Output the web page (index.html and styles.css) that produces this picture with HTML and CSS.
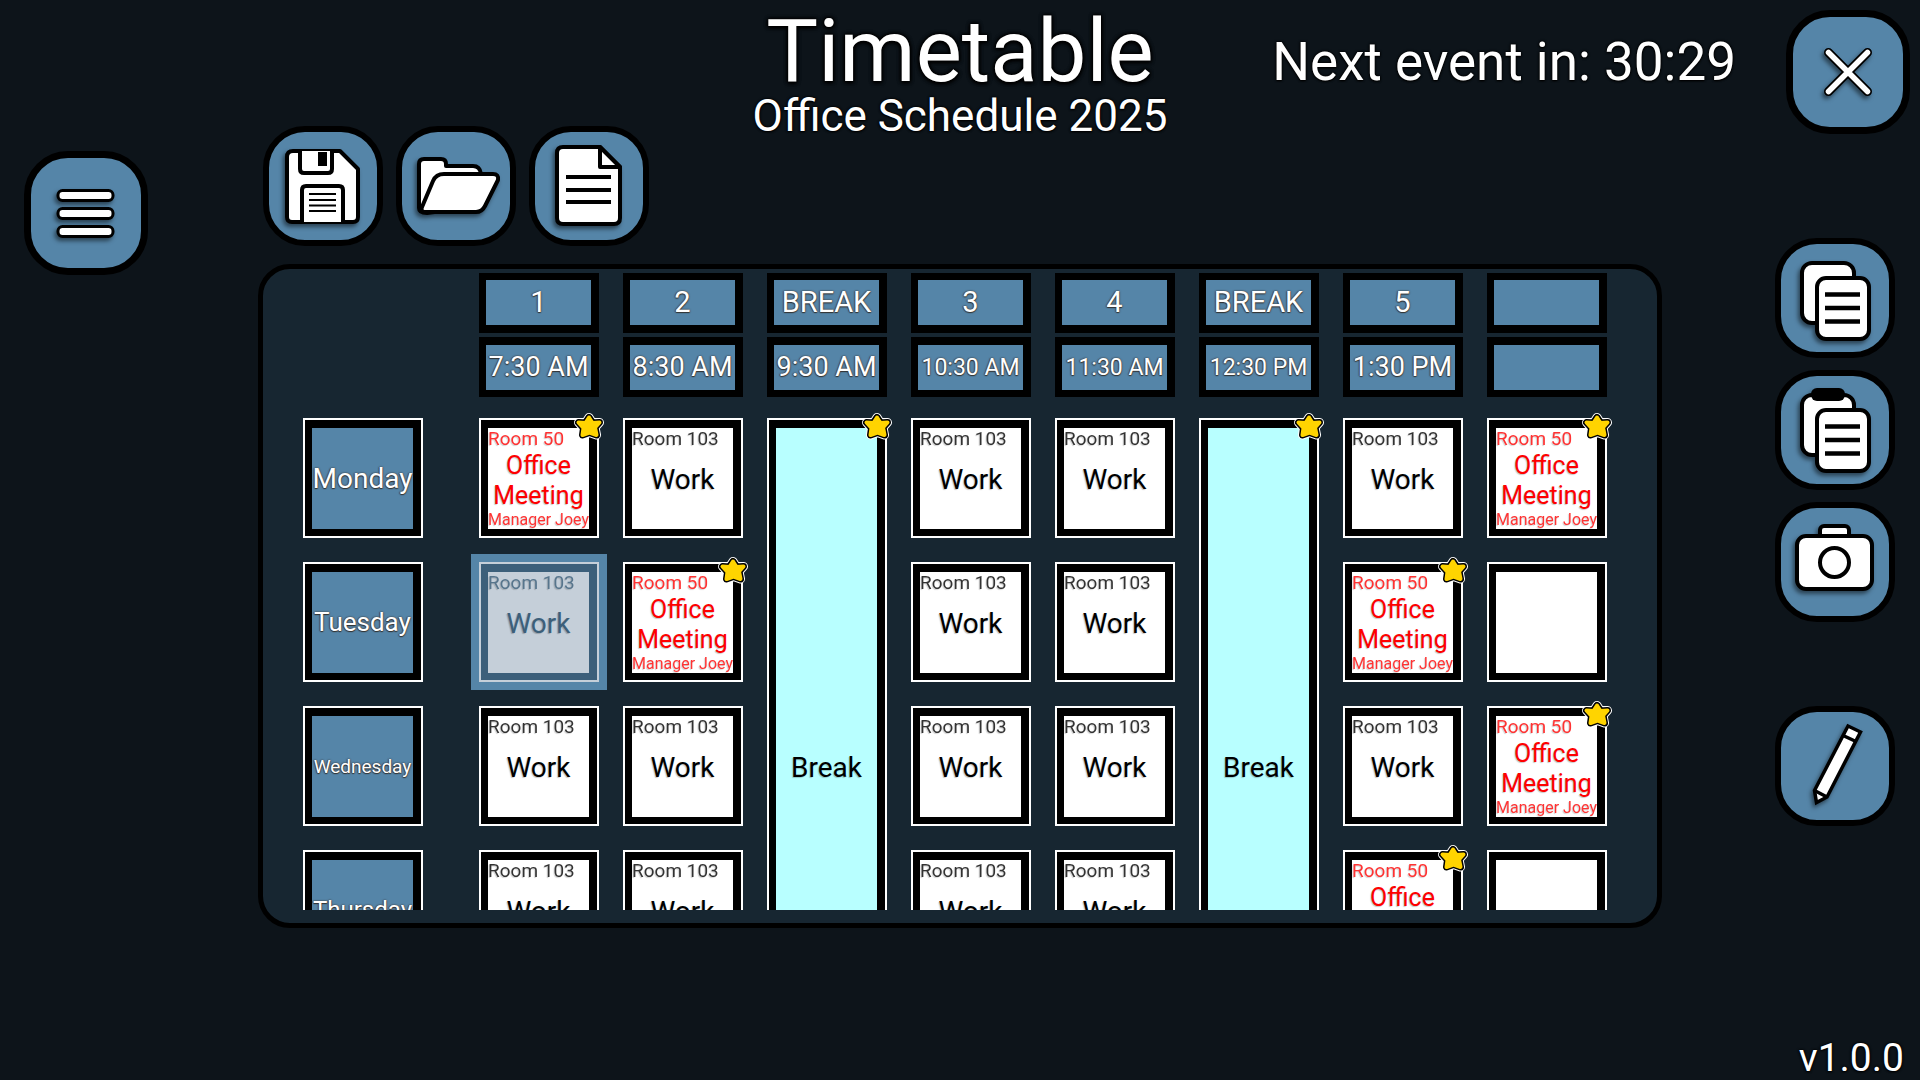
FILE: index.html
```html
<!DOCTYPE html>
<html lang="en">
<head>
<meta charset="utf-8">
<title>Timetable</title>
<link rel="stylesheet" href="styles.css">
</head>
<body>
<svg class="sprite" aria-hidden="true">
  <symbol id="star" viewBox="0 0 30 28">
    <g stroke-linejoin="round">
      <path d="M15 4.500 L18.500 10 L25.500 9.500 L21 14.500 L22.500 22 L15.500 19.500 L8.500 22 L9.500 15 L4.500 9.500 L11.500 10 Z" fill="#fff" stroke="#fff" stroke-width="9"/>
      <path d="M15 4.500 L18.500 10 L25.500 9.500 L21 14.500 L22.500 22 L15.500 19.500 L8.500 22 L9.500 15 L4.500 9.500 L11.500 10 Z" fill="#000" stroke="#000" stroke-width="7"/>
      <path d="M15 4.500 L18.500 10 L25.500 9.500 L21 14.500 L22.500 22 L15.500 19.500 L8.500 22 L9.500 15 L4.500 9.500 L11.500 10 Z" fill="#ffd400" stroke="#ffd400" stroke-width="4"/>
    </g>
  </symbol>
</svg>

<header class="top">
  <div class="heading">
    <h1>Timetable</h1>
    <p class="subtitle">Office Schedule 2025</p>
  </div>
  <div class="top-right">
    <p class="countdown">Next event in: 30:29</p>
    <button class="tile tile-large" type="button" aria-label="Close">
      <svg class="icon" viewBox="0 0 124 124"><g fill="none" stroke-linecap="round"><path d="M42.500 42.500 L81.500 81.500 M81.500 42.500 L42.500 81.500" stroke="#000" stroke-width="9"/><path d="M42.500 42.500 L81.500 81.500 M81.500 42.500 L42.500 81.500" stroke="#fff" stroke-width="5.500"/></g></svg>
    </button>
  </div>
</header>

<nav class="rail-left">
  <button class="tile tile-large" type="button" aria-label="Menu">
    <svg class="icon" viewBox="0 0 124 124"><g fill="#fff" stroke="#000" stroke-width="3"><rect x="34" y="39.500" width="55" height="10" rx="4.500"/><rect x="34" y="57.500" width="55" height="10" rx="4.500"/><rect x="34" y="75.500" width="55" height="10" rx="4.500"/></g></svg>
  </button>
</nav>

<main>
  <div class="toolbar">
    <button class="tile" type="button" aria-label="Save">
      <svg class="icon" viewBox="0 0 120 120"><g fill="#fff" stroke="#000" stroke-width="4" stroke-linejoin="round"><path d="M30 25 H77 L95 43 V91 Q95 96 90 96 H29 Q24 96 24 91 V31 Q24 25 30 25 Z"/><path d="M37 25 V43 Q37 47 41 47 H65 Q69 47 69 43 V25"/><path d="M39 96 V64 Q39 60 43 60 H76 Q80 60 80 64 V96"/></g><path d="M55 26 H64 V40 H55 Z"/><path d="M46 68 H73 M46 74 H73 M46 79.500 H73 M46 85 H73" stroke="#000" stroke-width="2"/></svg>
    </button>
    <button class="tile" type="button" aria-label="Open">
      <svg class="icon" viewBox="0 0 120 120"><g fill="#fff" stroke="#000" stroke-width="4" stroke-linejoin="round"><path d="M23 82 V38 Q23 33 28 33 H45 Q50 33 50 38 V40 H77 Q84 40 85 48 V80 L31 87 Q23 87 23 82 Z"/><path d="M48 48 H97 Q103 48 102 54 L89 80 Q86 86 80 86 H30 Q24 86 26 81 L37 55 Q40 48 48 48 Z"/></g></svg>
    </button>
    <button class="tile" type="button" aria-label="New document">
      <svg class="icon" viewBox="0 0 120 120"><g fill="#fff" stroke="#000" stroke-width="4" stroke-linejoin="round"><path d="M34 21 H71 L91 41 V92 Q91 98 85 98 H34 Q28 98 28 92 V27 Q28 21 34 21 Z"/><path d="M71 21 V41 H91 Z"/></g><path d="M37 51 H82 M37 64 H82 M37 76 H82" stroke="#000" stroke-width="4"/></svg>
    </button>
  </div>

  <section class="panel">
    <div class="scroller">
      <table class="timetable">
        <thead>
          <tr class="periods"><td class="corner"></td><th>1</th><th>2</th><th>BREAK</th><th>3</th><th>4</th><th>BREAK</th><th>5</th><th></th></tr>
          <tr class="times"><td class="corner"></td><th>7:30 AM</th><th>8:30 AM</th><th>9:30 AM</th><th class="long">10:30 AM</th><th class="long">11:30 AM</th><th class="long">12:30 PM</th><th>1:30 PM</th><th></th></tr>
        </thead>
        <tbody>
          <tr>
            <th scope="row" class="box day">Monday</th>
            <td class="box slot meeting"><span class="room">Room 50</span><span class="name">Office Meeting</span><span class="who">Manager Joey</span><svg class="star"><use href="#star"/></svg></td>
            <td class="box slot"><span class="room">Room 103</span><span class="name">Work</span></td>
            <td class="box slot break" rowspan="5"><span class="name">Break</span><svg class="star"><use href="#star"/></svg></td>
            <td class="box slot"><span class="room">Room 103</span><span class="name">Work</span></td>
            <td class="box slot"><span class="room">Room 103</span><span class="name">Work</span></td>
            <td class="box slot break" rowspan="5"><span class="name">Break</span><svg class="star"><use href="#star"/></svg></td>
            <td class="box slot"><span class="room">Room 103</span><span class="name">Work</span></td>
            <td class="box slot meeting"><span class="room">Room 50</span><span class="name">Office Meeting</span><span class="who">Manager Joey</span><svg class="star"><use href="#star"/></svg></td>
          </tr>
          <tr>
            <th scope="row" class="box day medium">Tuesday</th>
            <td class="box slot selected"><span class="room">Room 103</span><span class="name">Work</span></td>
            <td class="box slot meeting"><span class="room">Room 50</span><span class="name">Office Meeting</span><span class="who">Manager Joey</span><svg class="star"><use href="#star"/></svg></td>
            <td class="box slot"><span class="room">Room 103</span><span class="name">Work</span></td>
            <td class="box slot"><span class="room">Room 103</span><span class="name">Work</span></td>
            <td class="box slot meeting"><span class="room">Room 50</span><span class="name">Office Meeting</span><span class="who">Manager Joey</span><svg class="star"><use href="#star"/></svg></td>
            <td class="box slot"></td>
          </tr>
          <tr>
            <th scope="row" class="box day longest">Wednesday</th>
            <td class="box slot"><span class="room">Room 103</span><span class="name">Work</span></td>
            <td class="box slot"><span class="room">Room 103</span><span class="name">Work</span></td>
            <td class="box slot"><span class="room">Room 103</span><span class="name">Work</span></td>
            <td class="box slot"><span class="room">Room 103</span><span class="name">Work</span></td>
            <td class="box slot"><span class="room">Room 103</span><span class="name">Work</span></td>
            <td class="box slot meeting"><span class="room">Room 50</span><span class="name">Office Meeting</span><span class="who">Manager Joey</span><svg class="star"><use href="#star"/></svg></td>
          </tr>
          <tr>
            <th scope="row" class="box day long">Thursday</th>
            <td class="box slot"><span class="room">Room 103</span><span class="name">Work</span></td>
            <td class="box slot"><span class="room">Room 103</span><span class="name">Work</span></td>
            <td class="box slot"><span class="room">Room 103</span><span class="name">Work</span></td>
            <td class="box slot"><span class="room">Room 103</span><span class="name">Work</span></td>
            <td class="box slot meeting"><span class="room">Room 50</span><span class="name">Office Meeting</span><span class="who">Manager Joey</span><svg class="star"><use href="#star"/></svg></td>
            <td class="box slot"></td>
          </tr>
          <tr>
            <th scope="row" class="box day">Friday</th>
            <td class="box slot"></td>
            <td class="box slot"></td>
            <td class="box slot"></td>
            <td class="box slot"></td>
            <td class="box slot"></td>
            <td class="box slot"></td>
          </tr>
        </tbody>
      </table>
    </div>
  </section>
</main>

<aside class="rail-right">
  <button class="tile" type="button" aria-label="Copy">
    <svg class="icon" viewBox="0 0 120 120"><g fill="#fff" stroke="#000" stroke-width="4"><rect x="27" y="25" width="52" height="60" rx="10"/><rect x="42" y="40" width="52" height="61" rx="9"/></g><path d="M50 56.500 H85 M50 70 H85 M50 83.500 H85" stroke="#000" stroke-width="4.500"/></svg>
  </button>
  <button class="tile" type="button" aria-label="Paste">
    <svg class="icon" viewBox="0 0 120 120"><g fill="#fff" stroke="#000" stroke-width="4"><rect x="27" y="25" width="52" height="60" rx="10"/><rect x="42" y="40" width="52" height="61" rx="9"/></g><rect x="36" y="18" width="34" height="13" rx="6"/><path d="M50 56.500 H85 M50 70 H85 M50 83.500 H85" stroke="#000" stroke-width="4.500"/></svg>
  </button>
  <button class="tile" type="button" aria-label="Take picture">
    <svg class="icon" viewBox="0 0 120 120"><g fill="#fff" stroke="#000" stroke-width="4"><rect x="45" y="24" width="29" height="20" rx="4"/><rect x="22" y="34" width="75" height="53" rx="9"/><circle cx="59.500" cy="60.500" r="14.500"/></g></svg>
  </button>
  <button class="tile edit" type="button" aria-label="Edit">
    <svg class="icon" viewBox="0 0 120 120"><g fill="#fff" stroke="#000" stroke-width="3.500"><path d="M73 20 L85.500 26 L52 91 L41.500 96.500 L39.500 84.500 Z"/><path d="M67 29 L81 35.500 M39.500 84.500 L52 91"/></g></svg>
  </button>
</aside>

<footer class="version">v1.0.0</footer>
</body>
</html>
```
FILE: styles.css
```css
:root {
  --blue: #5585a8;
  --night: #0d141a;
  --panel: #172631;
}

* { box-sizing: border-box; }

body {
  margin: 0;
  min-height: 100vh;
  display: grid;
  grid-template: auto 1fr auto / 258px 1fr 258px;
  background: var(--night);
  color: #fff;
  font-family: Roboto, "Liberation Sans", sans-serif;
  text-shadow: 0 0 3px #000, 0 1px 2px #000, 0 0 2px #000;
}

h1, p { margin: 0; font-weight: 400; }

.sprite { display: none; }

.top {
  grid-column: 1 / -1;
  display: grid;
  grid-template-columns: 1fr auto 1fr;
}

.heading {
  grid-column: 2;
  padding-top: 8px;
  text-align: center;
}

h1 {
  font-size: 87px;
  line-height: 86px;
  text-shadow: 0 0 4px #000, 0 0 4px #000, 0 2px 4px #000, 0 0 3px #000;
}

.subtitle { font-size: 44px; line-height: 44px; }

.top-right {
  display: flex;
  justify-content: flex-end;
  align-items: flex-start;
  gap: 50px;
  padding: 10px 10px 0 0;
}

.countdown { font-size: 53px; line-height: 104px; white-space: nowrap; }

.tile {
  display: block;
  width: 120px;
  height: 120px;
  padding: 0;
  border: 6px solid #000;
  border-radius: 42px;
  background: var(--blue);
  cursor: pointer;
}

.tile-large {
  width: 124px;
  height: 124px;
  border-width: 7px;
  border-radius: 44px;
}

.icon {
  display: block;
  width: 120px;
  height: 120px;
  margin: -6px;
  filter: drop-shadow(-2px 3px 2px rgba(0, 0, 0, .5));
}

.tile-large .icon { width: 124px; height: 124px; margin: -7px; }

.rail-left { padding: 13px 0 0 24px; }

main { margin-top: -12px; }

.toolbar { display: flex; gap: 13px; padding-left: 5px; }

.panel {
  margin-top: 18px;
  padding-bottom: 13px;
  border: 5px solid #000;
  border-radius: 32px;
  background: var(--panel);
}

.scroller {
  max-height: calc(100vh - 439px);
  padding: 4px 50px 0 40px;
  overflow: auto;
  scrollbar-width: none;
}

.timetable {
  display: grid;
  grid-template-columns: 152px repeat(8, 120px);
  column-gap: 24px;
  justify-content: center;
}

.timetable thead,
.timetable tbody,
.timetable tr { display: contents; }

.timetable td,
.timetable th { padding: 0; font-weight: 400; text-align: center; }

.timetable th {
  text-shadow: 0 0 2px #333, 0 1px 1px #333, -1px 0 1px #555;
}

.periods th,
.times th {
  height: 60px;
  border: solid #000;
  border-width: 7px 8px 8px 7px;
  background: var(--blue);
  line-height: 45px;
  white-space: nowrap;
}

.periods th { margin-bottom: 4px; font-size: 29px; }

.times th { margin-bottom: 21px; border-width: 8px 8px 7px 7px; font-size: 27px; }

.times th.long { font-size: 23px; }

.timetable .box {
  --fill: #fff;
  --frame: #000;
  --edge: #fff;
  position: relative;
  width: 120px;
  height: 120px;
  margin-bottom: 24px;
  padding: 8px 8px 7px 7px;
  border: 2px solid var(--edge);
  background: linear-gradient(var(--fill), var(--fill)) content-box, var(--frame);
}

.timetable .day {
  --fill: var(--blue);
  font-size: 28px;
  line-height: 101px;
}

.timetable .medium { font-size: 26px; }
.timetable .long { font-size: 24px; }
.timetable .longest { font-size: 19px; }

.timetable .slot {
  display: grid;
  grid-template-rows: 22px 1fr 20px;
  color: #000;
  text-shadow: -1px 1px 1px rgba(0, 0, 0, .22);
}

.timetable .meeting { grid-template-rows: 22px 1fr 18px; color: #f00; }

.timetable .break {
  --fill: #b8ffff;
  grid-row: span 5;
  height: auto;
}

.timetable .selected {
  --fill: #c5cfd9;
  --frame: #3c5f7a;
  --edge: #c5cfd9;
  color: #3c5f7a;
  box-shadow: 0 0 0 8px var(--blue);
}

.room {
  font-size: 19px;
  line-height: 22px;
  text-align: left;
  opacity: .8;
}

.name {
  grid-row: 2;
  align-self: center;
  font-size: 28px;
  line-height: 30px;
}

.meeting .name { font-size: 25px; }

.who {
  grid-row: 3;
  font-size: 16px;
  line-height: 18px;
  white-space: nowrap;
  opacity: .8;
}

.star {
  position: absolute;
  top: -7px;
  right: -7px;
  width: 30px;
  height: 28px;
  overflow: visible;
}

.rail-right {
  display: flex;
  flex-direction: column;
  align-items: flex-end;
  gap: 12px;
  padding: 100px 25px 0 0;
}

.edit { margin-top: 72px; }

.version {
  grid-column: 1 / -1;
  padding-right: 16px;
  font-size: 39px;
  line-height: 44px;
  text-align: right;
}
```
